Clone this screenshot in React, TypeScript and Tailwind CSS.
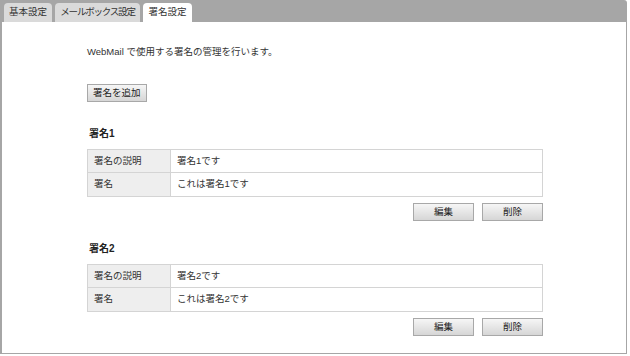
import React from "react";

const font = { fontFamily: '"Liberation Sans", "Noto Sans CJK JP", sans-serif' };

type Sig = { title: string; desc: string; body: string };

const sigs: Sig[] = [
  { title: "署名1", desc: "署名1です", body: "これは署名1です" },
  { title: "署名2", desc: "署名2です", body: "これは署名2です" },
];

function Btn({ label, wide }: { label: string; wide?: boolean }) {
  return (
    <button
      className={
        "h-[18px] border border-[#a8a8a8] bg-gradient-to-b from-[#f6f6f6] to-[#d6d6d6] text-[9.5px] leading-none text-[#222] " +
        (wide ? "w-[61px]" : "px-[5px]")
      }
    >
      {label}
    </button>
  );
}

function Row({ label, value, last }: { label: string; value: string; last?: boolean }) {
  return (
    <div className={"flex h-[23px] " + (last ? "" : "border-b border-[#d4d4d4]")}>
      <div className="flex w-[83px] items-center border-r border-[#d4d4d4] bg-[#eeeeee] pl-[6px]">{label}</div>
      <div className="flex flex-1 items-center pl-[6px]">{value}</div>
    </div>
  );
}

function Signature({ sig, first }: { sig: Sig; first?: boolean }) {
  return (
    <div className={first ? "mt-[25px]" : "mt-[21px]"}>
      <div className="pl-[2px] text-[10px] font-bold leading-[14px] text-[#222]">{sig.title}</div>
      <div className="mt-[8px] w-[456px] border border-[#d4d4d4]">
        <Row label="署名の説明" value={sig.desc} />
        <Row label="署名" value={sig.body} last />
      </div>
      <div className="mt-[6px] flex w-[456px] justify-end gap-[8px]">
        <Btn label="編集" wide />
        <Btn label="削除" wide />
      </div>
    </div>
  );
}

export default function App() {
  return (
    <div className="h-[356px] w-[630px] bg-white text-[9.5px] text-[#333]" style={font}>
      <div className="flex h-[354px] w-[627px] flex-col rounded-tr-[3px] bg-[#a6a6a6] pb-px pl-[2px] pr-px">
        {/* tabs */}
        <div className="flex h-[22px] items-end gap-[3px] pl-[2px]">
          <div className="flex h-[19px] items-center rounded-t-[4px] bg-[#dadada] px-[5px] text-[#333]">基本設定</div>
          <div className="flex h-[19px] w-[85px] items-center justify-center rounded-t-[4px] bg-[#dadada] tracking-[-1.2px] text-[#333]">メールボックス設定</div>
          <div className="flex h-[19px] w-[49px] items-center justify-center rounded-t-[4px] bg-white text-[#333]">署名設定</div>
        </div>

        {/* panel */}
        <div className="flex-1 bg-white pl-[85px] pt-[23px]">
          <div className="leading-[14px]">WebMail で使用する署名の管理を行います。</div>
          <div className="mt-[25px]">
            <Btn label="署名を追加" />
          </div>
          {sigs.map((s, i) => (
            <Signature key={s.title} sig={s} first={i === 0} />
          ))}
        </div>
      </div>
    </div>
  );
}
